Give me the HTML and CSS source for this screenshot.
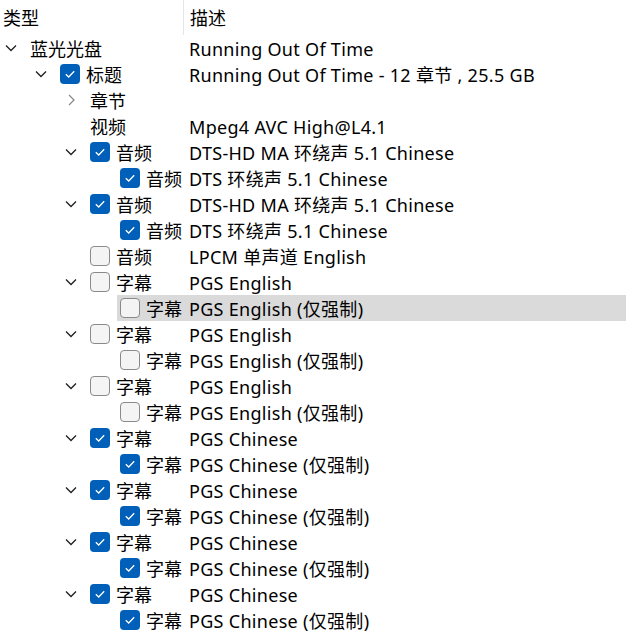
FILE: index.html
```html
<!DOCTYPE html>
<html lang="zh">
<head>
<meta charset="utf-8">
<title>Tree</title>
<link rel="stylesheet" href="styles.css">
</head>
<body>
<div class="tree">
  <div class="header">
    <div class="hcell hname">类型</div>
    <div class="hcell hdesc">描述</div>
  </div>
  <div class="rows" id="rows"></div>
</div>
<script src="app.js"></script>
</body>
</html>
```

FILE: styles.css
```css
html, body {
  margin: 0;
  padding: 0;
  background: #ffffff;
}
body {
  font-family: "Noto Sans", "Noto Sans CJK SC", sans-serif;
  font-size: 18px;
  color: #000000;
  width: 626px;
  height: 633px;
  overflow: hidden;
}
.header {
  display: flex;
  height: 35px;
  align-items: stretch;
}
.hcell {
  display: flex;
  align-items: center;
}
.hname {
  width: 184px;
  padding-left: 3px;
  box-sizing: border-box;
  border-right: 1px solid #e5e5e5;
  padding-bottom: 1px;
}
.hdesc {
  padding-left: 6px;
  padding-bottom: 1px;
}
.row {
  display: flex;
  height: 26px;
  align-items: stretch;
}
.tcell {
  width: 184px;
  flex: none;
  display: flex;
  align-items: stretch;
}
.indent {
  flex: none;
}
.l0 { width: 0; }
.l1 { width: 30px; }
.l2 { width: 60px; }
.l3 { width: 90px; }
.exp {
  width: 27px;
  flex: none;
  display: flex;
  align-items: center;
  padding-left: 5px;
  box-sizing: border-box;
}
.exp-r {
  display: flex;
  padding-left: 2px;
}
.item {
  flex: 1;
  display: flex;
  align-items: center;
  padding-left: 3px;
  gap: 6px;
  white-space: nowrap;
  min-width: 0;
}
.desc {
  flex: 1;
  display: flex;
  align-items: center;
  padding-left: 5px;
  white-space: nowrap;
  letter-spacing: 0.3px;
}
.row.sel .item, .row.sel .desc {
  background: #dadada;
}
.cb {
  width: 20px;
  height: 20px;
  box-sizing: border-box;
  border-radius: 4px;
  flex: none;
  display: block;
}
.cb.off {
  border: 1px solid #8a8a8a;
  background: #f4f4f4;
}
.cb.on {
  background: #005fb8;
}
.chev-down { stroke: #1f1f1f; }
.chev-right { stroke: #8a8a8a; }
.txt { line-height: 26px; padding-top: 1px; }
```

FILE: app.js
```js
var data = [
  [0, "d", null, "蓝光光盘", "Running Out Of Time"],
  [1, "d", 1, "标题", "Running Out Of Time - 12 章节 , 25.5 GB"],
  [2, "r", null, "章节", ""],
  [2, null, null, "视频", "Mpeg4 AVC High@L4.1"],
  [2, "d", 1, "音频", "DTS-HD MA 环绕声 5.1 Chinese"],
  [3, null, 1, "音频", "DTS 环绕声 5.1 Chinese"],
  [2, "d", 1, "音频", "DTS-HD MA 环绕声 5.1 Chinese"],
  [3, null, 1, "音频", "DTS 环绕声 5.1 Chinese"],
  [2, null, 0, "音频", "LPCM 单声道 English"],
  [2, "d", 0, "字幕", "PGS English"],
  [3, null, 0, "字幕", "PGS English (仅强制)", 1],
  [2, "d", 0, "字幕", "PGS English"],
  [3, null, 0, "字幕", "PGS English (仅强制)"],
  [2, "d", 0, "字幕", "PGS English"],
  [3, null, 0, "字幕", "PGS English (仅强制)"],
  [2, "d", 1, "字幕", "PGS Chinese"],
  [3, null, 1, "字幕", "PGS Chinese (仅强制)"],
  [2, "d", 1, "字幕", "PGS Chinese"],
  [3, null, 1, "字幕", "PGS Chinese (仅强制)"],
  [2, "d", 1, "字幕", "PGS Chinese"],
  [3, null, 1, "字幕", "PGS Chinese (仅强制)"],
  [2, "d", 1, "字幕", "PGS Chinese"],
  [3, null, 1, "字幕", "PGS Chinese (仅强制)"]
];
var down = '<svg width="12" height="8" viewBox="0 0 12 8"><path class="chev-down" d="M1 1.5 L6 6.5 L11 1.5" fill="none" stroke-width="1.3"/></svg>';
var right = '<span class="exp-r"><svg width="8" height="12" viewBox="0 0 8 12"><path class="chev-right" d="M2 1 L7 6 L2 11" fill="none" stroke-width="1.3"/></svg></span>';
var on = '<svg class="cb on" viewBox="0 0 20 20"><path d="M5.8 10.3 L8.7 13 L14.2 7.3" fill="none" stroke="#ffffff" stroke-width="1.3"/></svg>';
var off = '<span class="cb off"></span>';
var html = "";
data.forEach(function (r) {
  html += '<div class="row' + (r[5] ? ' sel' : '') + '"><div class="tcell">' +
    '<span class="indent l' + r[0] + '"></span>' +
    '<span class="exp">' + (r[1] === "d" ? down : r[1] === "r" ? right : "") + '</span>' +
    '<span class="item">' + (r[2] === 1 ? on : r[2] === 0 ? off : "") + '<span class="txt">' + r[3] + '</span></span>' +
    '</div><div class="desc"><span class="txt">' + r[4] + '</span></div></div>';
});
document.getElementById("rows").innerHTML = html;
```
